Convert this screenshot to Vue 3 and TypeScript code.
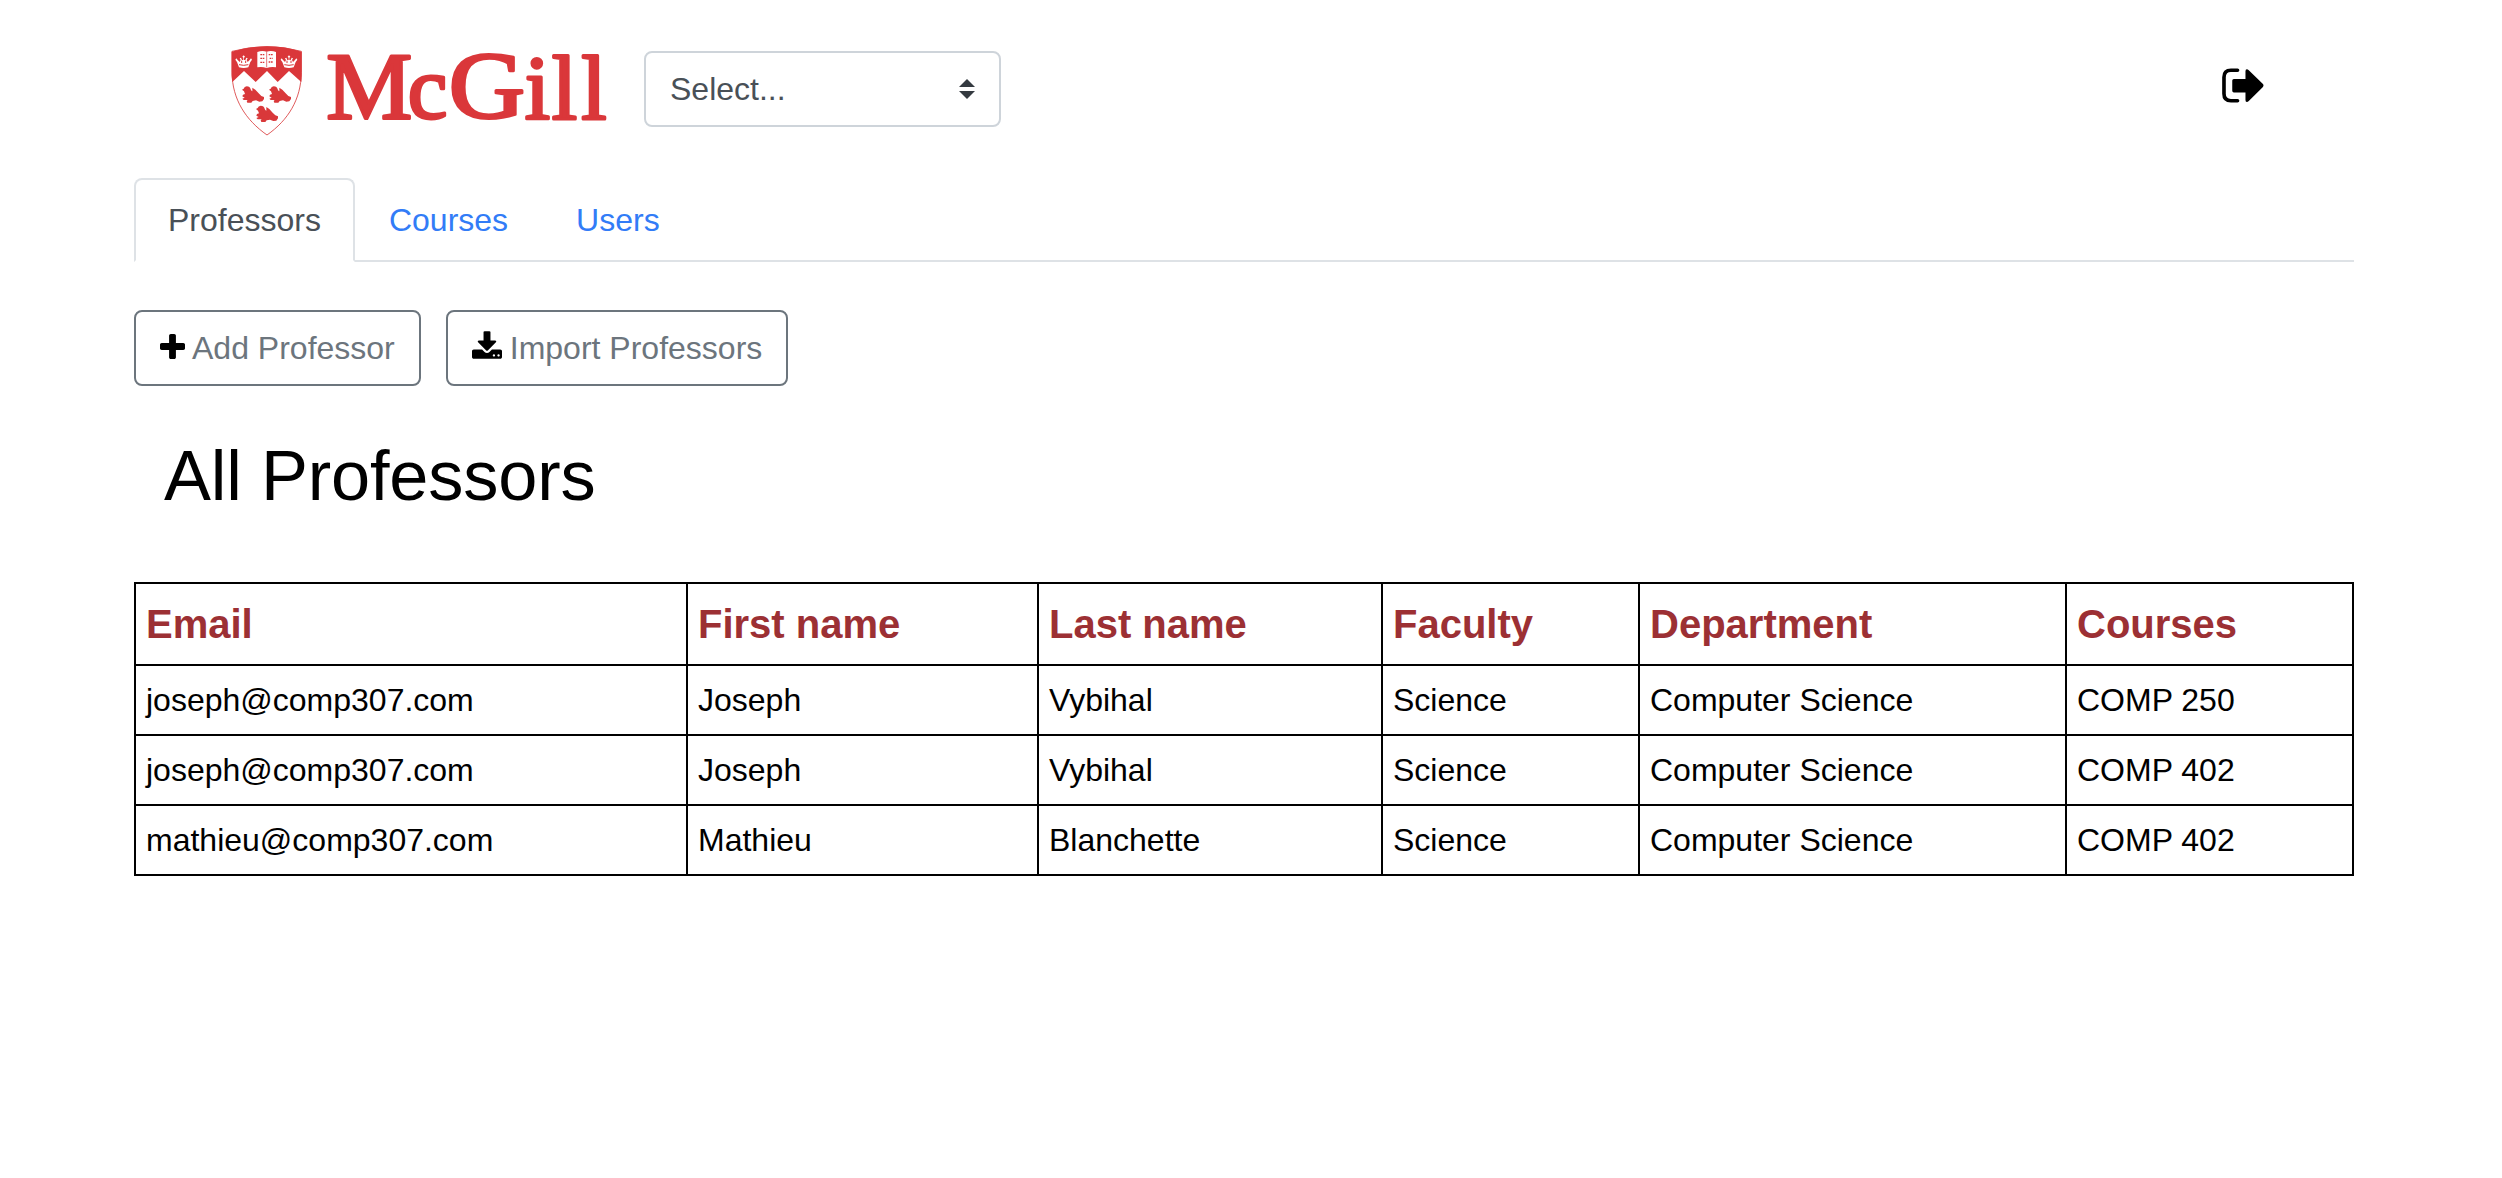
<script setup lang="ts">
import { ref } from 'vue'

interface Professor {
  email: string
  firstName: string
  lastName: string
  faculty: string
  department: string
  course: string
}

const tabs: string[] = ['Professors', 'Courses', 'Users']
const activeTab = ref<string>('Professors')

const columns: string[] = ['Email', 'First name', 'Last name', 'Faculty', 'Department', 'Courses']

const professors: Professor[] = [
  { email: 'joseph@comp307.com', firstName: 'Joseph', lastName: 'Vybihal', faculty: 'Science', department: 'Computer Science', course: 'COMP 250' },
  { email: 'joseph@comp307.com', firstName: 'Joseph', lastName: 'Vybihal', faculty: 'Science', department: 'Computer Science', course: 'COMP 402' },
  { email: 'mathieu@comp307.com', firstName: 'Mathieu', lastName: 'Blanchette', faculty: 'Science', department: 'Computer Science', course: 'COMP 402' },
]
</script>

<template>
  <div class="page">
    <header class="top">
      <svg class="logo" viewBox="0 0 1200 318" role="img" aria-label="McGill">
        <defs>
          <path id="bird" d="M0 9 L5 6 Q7 0 14 -1 Q24 -1 26 8 Q27 12 31 14 L31 3 L40 9 L50 20 L58 28 L66 31 L66 37 L61 44 L52 45 L42 41 L32 43 L28 48 L16 48 L14 43 L17 40 L5 40 L1 36 L8 33 L1 29 L3 24 L9 22 L6 14 Z" />
          <g id="crown">
            <path d="M4 36 L-2 20 L-7 13 L-4 9 L0 14 L6 20 L9 14 L6 9 L10 7 L13 14 L17 14 L17 7 L14 4 L18 0 L22 4 L19 7 V14 L23 14 L26 7 L30 9 L27 14 L30 20 L36 14 L40 9 L43 13 L38 20 L32 36 Q18 40 4 36 Z" fill="#fff" />
            <path d="M4 28 Q18 32 32 28" fill="none" stroke="#da373a" stroke-width="3" />
            <path d="M12 16 V23 M24 16 V23" stroke="#da373a" stroke-width="3" />
          </g>
        </defs>
        <path d="M36 46 Q88 32 141 32 Q194 32 244 46 V110 C243 190 205 252 141 297 C77 252 37 190 36 110 Z" fill="#fff" stroke="#d9383a" stroke-width="2.5" />
        <path d="M35 47 Q88 31 141 31 Q194 31 245 47 V118 L244 138 L207 105 L173 138 L141 105 L107 138 L72 105 L37 138 L35 118 Z" fill="#da373a" />
        <use href="#crown" x="53" y="58" />
        <use href="#crown" x="189" y="58" />
        <path d="M112 48 Q126 43 140 47 Q154 43 168 48 V94 Q154 91 140 96 Q126 91 112 94 Z" fill="#fff" />
        <g fill="none" stroke="#da373a">
          <path d="M140 47 V94" stroke-width="2" />
          <path d="M121 56 H133 M121 67 H135 M121 79 H134 M146 56 H160 M149 67 H158 M146 78 H160" stroke-width="4" stroke-dasharray="5 2" />
        </g>
        <g fill="#d9383a">
          <use href="#bird" x="66" y="152" />
          <use href="#bird" x="147" y="152" />
          <use href="#bird" x="108" y="210" />
        </g>
        <text class="wordmark"><tspan x="319" y="247.5" textLength="258" lengthAdjust="spacingAndGlyphs">M</tspan><tspan class="c" x="563" y="245.5">c</tspan><tspan class="g" x="686" y="245.5" textLength="229" lengthAdjust="spacingAndGlyphs">G</tspan><tspan class="ill" x="914 995 1084" y="247.5">ill</tspan></text>
      </svg>

      <button class="select" type="button">
        <span>Select...</span>
        <svg class="caret" viewBox="0 0 4 5"><path fill="#343a40" d="M2 0 0 2h4zM2 5 0 3h4z" /></svg>
      </button>

      <svg class="logout" viewBox="65 55 127 104">
        <path d="M112 61 H92 Q71 61 71 82 V132 Q71 153 92 153 H112" fill="none" stroke="#000" stroke-width="11" stroke-linecap="round" />
        <path d="M101 87 H136 V64 Q136 58 140 58 Q143 58 146 61 L188 102 Q193 107 188 112 L146 154 Q143 157 140 157 Q136 157 136 151 V128 H101 Q96 128 96 123 V92 Q96 87 101 87 Z" />
      </svg>
    </header>

    <main class="container">
      <nav class="tabs">
        <a v-for="tab in tabs" :key="tab" class="tab" :class="{ active: tab === activeTab }" @click="activeTab = tab">{{ tab }}</a>
      </nav>

      <div class="actions">
        <button class="btn" type="button">
          <svg class="plus" viewBox="0 0 1408 1408"><path d="M1408 608v192q0 40-28 68t-68 28H896v416q0 40-28 68t-68 28H608q-40 0-68-28t-28-68V896H96q-40 0-68-28T0 800V608q0-40 28-68t68-28h416V96q0-40 28-68t68-28h192q40 0 68 28t28 68v416h416q40 0 68 28t28 68z" /></svg>
          <span>Add Professor</span>
        </button>
        <button class="btn" type="button">
          <svg class="download" viewBox="0 0 1664 1536"><path d="M1280 1344q0-26-19-45t-45-19-45 19-19 45 19 45 45 19 45-19 19-45zm256 0q0-26-19-45t-45-19-45 19-19 45 19 45 45 19 45-19 19-45zm128-224v320q0 40-28 68t-68 28H96q-40 0-68-28t-28-68v-320q0-40 28-68t68-28h465l135 136q58 56 136 56t136-56l136-136h464q40 0 68 28t28 68zm-325-569q17 41-14 70l-448 448q-18 19-45 19t-45-19L339 621q-31-29-14-70 17-39 59-39h256V64q0-26 19-45t45-19h256q26 0 45 19t19 45v448h256q42 0 59 39z" /></svg>
          <span>Import Professors</span>
        </button>
      </div>

      <h1>All Professors</h1>

      <table>
        <colgroup>
          <col class="c-email" /><col class="c-first" /><col class="c-last" />
          <col class="c-faculty" /><col class="c-dept" /><col class="c-courses" />
        </colgroup>
        <thead>
          <tr><th v-for="column in columns" :key="column">{{ column }}</th></tr>
        </thead>
        <tbody>
          <tr v-for="(p, i) in professors" :key="i">
            <td>{{ p.email }}</td>
            <td>{{ p.firstName }}</td>
            <td>{{ p.lastName }}</td>
            <td>{{ p.faculty }}</td>
            <td>{{ p.department }}</td>
            <td>{{ p.course }}</td>
          </tr>
        </tbody>
      </table>
    </main>
  </div>
</template>

<style>
body {
  margin: 0;
  background: #fff;
}
</style>

<style scoped>
.page,
.page * {
  box-sizing: border-box;
}
.page {
  min-height: 1178px;
  background: #fff;
  color: #000;
  font-family: "Liberation Sans", Arial, sans-serif;
  font-size: 32px;
  line-height: 48px;
}
.top {
  display: flex;
  align-items: flex-start;
  height: 178px;
  padding: 36px 238px 0 220px;
}
.logo {
  width: 400px;
  height: 106px;
  margin-right: 24px;
  overflow: visible;
}
.wordmark {
  font-family: "Liberation Serif", "Times New Roman", serif;
  font-size: 283px;
  fill: #da373a;
  stroke: #da373a;
  stroke-width: 9px;
  stroke-linejoin: round;
}
.wordmark .c {
  font-size: 268px;
}
.wordmark .g {
  font-size: 284px;
}
.wordmark .ill {
  font-size: 274px;
}
.select {
  display: flex;
  align-items: center;
  justify-content: space-between;
  width: 357px;
  height: 76px;
  margin-top: 15px;
  padding: 0 24px;
  border: 2px solid #ced4da;
  border-radius: 8px;
  background: #fff;
  color: #495057;
  font: inherit;
}
.caret {
  width: 16px;
  height: 20px;
}
.logout {
  width: 42px;
  height: 35px;
  margin-top: 32px;
  margin-left: auto;
}
.container {
  width: 2220px;
  margin-left: 134px;
}
.tabs {
  display: flex;
  height: 84px;
  border-bottom: 2px solid #dee2e6;
}
.tab {
  height: 84px;
  padding: 16px 32px;
  border: 2px solid transparent;
  border-radius: 8px 8px 0 0;
  color: #327cf7;
  cursor: pointer;
}
.tab.active {
  border-color: #dee2e6 #dee2e6 #fff;
  background: #fff;
  color: #495057;
}
.actions {
  display: flex;
  gap: 25px;
  margin-top: 48px;
}
.btn {
  display: flex;
  align-items: center;
  gap: 7px;
  height: 76px;
  padding: 0 24px;
  border: 2px solid #6c757d;
  border-radius: 8px;
  background: #fff;
  color: #6c757d;
  font: inherit;
  white-space: nowrap;
}
.btn + .btn {
  gap: 8px;
}
.plus {
  width: 25px;
  height: 25px;
  margin-top: -3px;
}
.download {
  width: 30px;
  height: 28px;
  margin-top: -6px;
}
h1 {
  margin: 48px 0 0;
  padding-left: 30px;
  font-size: 70.4px;
  font-weight: 400;
  letter-spacing: -0.2px;
  line-height: 84px;
}
table {
  width: 2220px;
  margin-top: 64px;
  border-collapse: collapse;
  table-layout: fixed;
}
th,
td {
  padding: 10px;
  border: 2px solid #000;
  text-align: left;
}
th {
  color: #9c3034;
  font-size: 40px;
  font-weight: 700;
  line-height: 60px;
}
.c-email { width: 552px; }
.c-first { width: 351px; }
.c-last { width: 344px; }
.c-faculty { width: 257px; }
.c-dept { width: 427px; }
.c-courses { width: 287px; }
</style>
